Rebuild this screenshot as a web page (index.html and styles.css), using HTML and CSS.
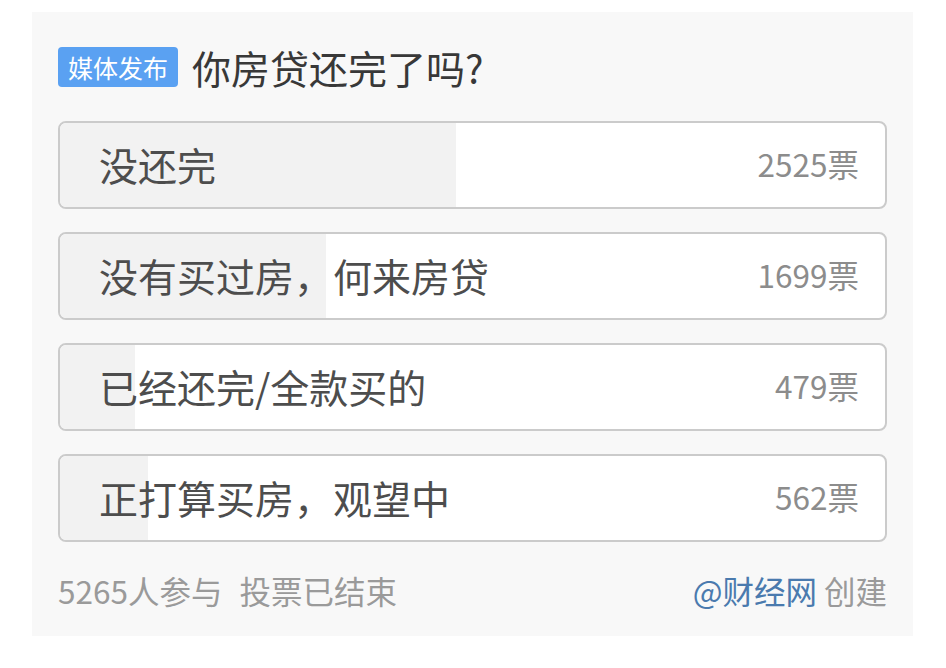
FILE: index.html
```html
<!DOCTYPE html>
<html lang="zh-CN">
<head>
<meta charset="utf-8">
<title>投票</title>
<link rel="stylesheet" href="styles.css">
</head>
<body>
<div class="card">
  <div class="header">
    <span class="badge">媒体发布</span>
    <h1 class="title">你房贷还完了吗?</h1>
  </div>
  <div class="options">
    <div class="option">
      <div class="fill" style="width:47.96%"></div>
      <span class="label">没还完</span>
      <span class="count">2525票</span>
    </div>
    <div class="option">
      <div class="fill" style="width:32.27%"></div>
      <span class="label">没有买过房，何来房贷</span>
      <span class="count">1699票</span>
    </div>
    <div class="option">
      <div class="fill" style="width:9.1%"></div>
      <span class="label">已经还完/全款买的</span>
      <span class="count">479票</span>
    </div>
    <div class="option">
      <div class="fill" style="width:10.67%"></div>
      <span class="label">正打算买房，观望中</span>
      <span class="count">562票</span>
    </div>
  </div>
  <div class="footer">
    <div class="stats"><span>5265人参与</span><span class="ended">投票已结束</span></div>
    <div class="creator"><span class="author">@财经网</span> 创建</div>
  </div>
</div>
</body>
</html>
```

FILE: styles.css
```css
html, body {
  margin: 0;
  padding: 0;
  background: #ffffff;
}
body {
  font-family: "Noto Sans CJK SC", "Noto Sans", sans-serif;
  padding: 12px 0 0 32px;
}
.card {
  width: 881px;
  box-sizing: border-box;
  background: #f8f8f8;
  padding: 35px 26px 26px 26px;
}
.header {
  display: flex;
  align-items: center;
  height: 40px;
}
.badge {
  display: inline-flex;
  align-items: center;
  height: 40px;
  padding: 0 10px;
  box-sizing: border-box;
  background: #5aa1f2;
  color: #ffffff;
  font-size: 25px;
  border-radius: 4px;
}
.title {
  margin: 0 0 0 14px;
  font-size: 39px;
  font-weight: normal;
  color: #383838;
  line-height: 40px;
}
.options {
  display: flex;
  flex-direction: column;
  gap: 23px;
  margin-top: 34px;
}
.option {
  position: relative;
  height: 88px;
  box-sizing: border-box;
  border: 2px solid #cbcbcb;
  border-radius: 8px;
  background: #ffffff;
  overflow: hidden;
  display: flex;
  align-items: center;
  justify-content: space-between;
  padding: 0 26px 2px 39px;
}
.fill {
  position: absolute;
  left: 0;
  top: 0;
  bottom: 0;
  background: #f2f2f2;
}
.label {
  position: relative;
  font-size: 39px;
  color: #4d4d4d;
  line-height: 1;
}
.count {
  position: relative;
  font-size: 31.5px;
  color: #8c8c8c;
  line-height: 1;
}
.footer {
  display: flex;
  justify-content: space-between;
  align-items: center;
  margin-top: 28px;
  height: 40px;
  font-size: 31.5px;
  color: #9a9a9a;
}
.ended {
  margin-left: 17px;
}
.creator {
  color: #9a9a9a;
}
.author {
  color: #4a7aae;
}
```
